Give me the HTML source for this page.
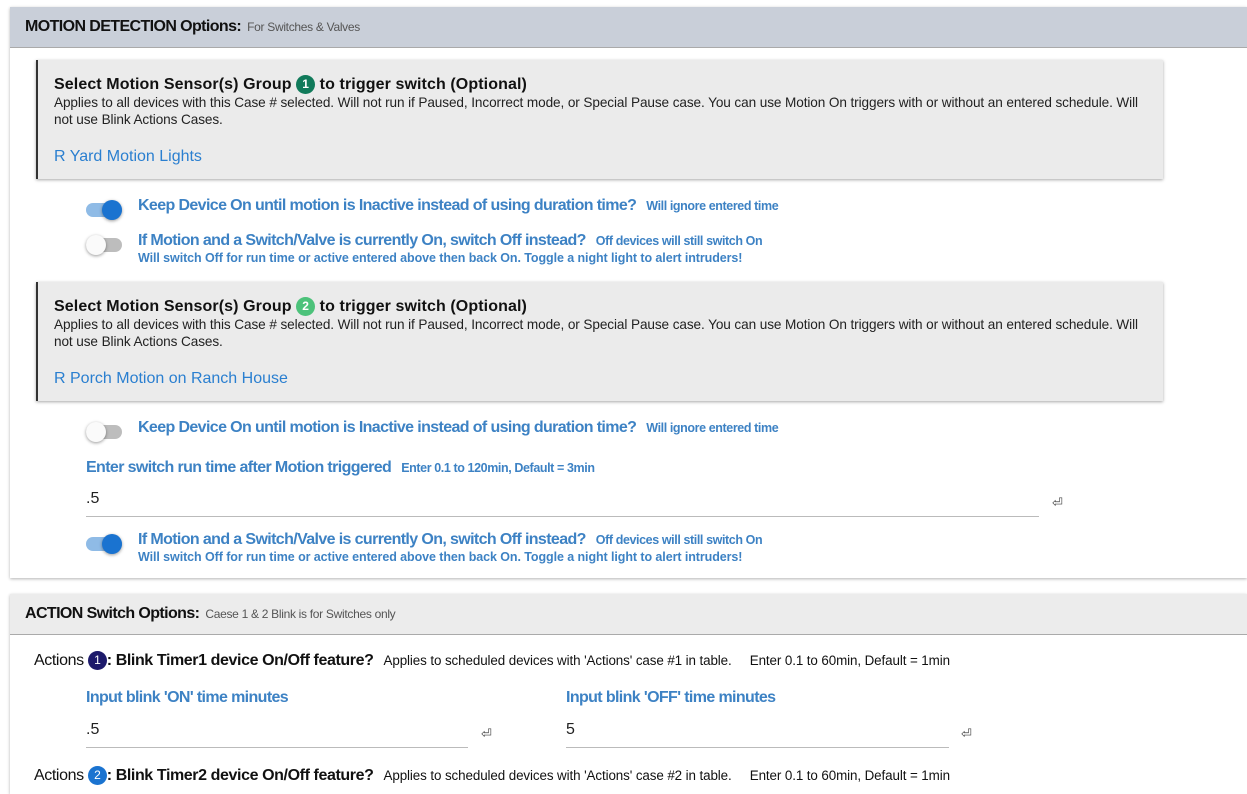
<!DOCTYPE html>
<html><head><meta charset="utf-8"><style>
body{margin:0;width:1247px;height:779px;overflow:hidden;background:#fff;font-family:"Liberation Sans",sans-serif;position:relative}
.abs{position:absolute;white-space:nowrap}
.card{position:absolute;left:10px;right:0;background:#fff;box-shadow:0 1px 3px rgba(0,0,0,.3)}
.hdr{position:absolute;left:0;right:0;top:0;height:40px;border-bottom:1px solid #aaa}
.hdr b{position:absolute;left:15px;top:11px;font-size:16px;letter-spacing:-.6px;color:#111}
.hdr span{font-size:12px;font-weight:normal;color:#555;margin-left:6px;letter-spacing:-.3px}
.box{position:absolute;left:36px;width:1125px;background:#ebebeb;border-left:2px solid #333;box-shadow:0 1px 3px rgba(0,0,0,.35)}
.box .t{position:absolute;left:16px;top:15px;font-size:16px;font-weight:bold;color:#111;letter-spacing:.1px}
.box .d{position:absolute;left:16px;top:34px;font-size:13.6px;color:#222;line-height:17px;width:1090px;white-space:normal;letter-spacing:-.1px}
.box .l{position:absolute;left:16px;top:88px;font-size:16px;color:#2a7fd0}
.num{display:inline-block;width:19px;height:19px;border-radius:50%;color:#fff;font-size:12px;text-align:center;line-height:19px;vertical-align:1px}
.tog{position:absolute;width:36px;height:14px;border-radius:7px}
.tog i{position:absolute;top:-3px;width:20px;height:20px;border-radius:50%;box-shadow:0 1px 3px rgba(0,0,0,.4)}
.on{background:#8fbbe6}.on i{left:16px;background:#1a73d0}
.off{background:#bdbdbd}.off i{left:0;background:#fafafa}
.lab{position:absolute;font-size:16px;color:#3d82c4;white-space:nowrap;letter-spacing:-.62px;font-weight:bold}
.lab small{font-size:12.5px;margin-left:10px;letter-spacing:-.4px}
.sub{position:absolute;font-size:12.5px;color:#3d82c4;white-space:nowrap;letter-spacing:-.08px;font-weight:bold}
.inp{position:absolute;border-bottom:1px solid #bbb;height:26px;padding-top:4px;font-size:16px;color:#222}
.ret{position:absolute;font-size:13px;color:#444}
</style></head><body>
<div class="card" style="top:7px;height:571px">
 <div class="hdr" style="background:#c9cfd9"><b>MOTION DETECTION Options:<span>For Switches &amp; Valves</span></b></div>
</div>
<div class="box" style="top:60px;height:119px">
 <div class="t">Select Motion Sensor(s) Group <span class="num" style="background:#107a5a">1</span> to trigger switch (Optional)</div>
 <div class="d">Applies to all devices with this Case # selected. Will not run if Paused, Incorrect mode, or Special Pause case. You can use Motion On triggers with or without an entered schedule. Will not use Blink Actions Cases.</div>
 <div class="l">R Yard Motion Lights</div>
</div>
<div class="tog on" style="left:86px;top:203px"><i></i></div>
<div class="lab" style="left:138px;top:197px">Keep Device On until motion is Inactive instead of using duration time?<small>Will ignore entered time</small></div>
<div class="tog off" style="left:86px;top:238px"><i></i></div>
<div class="lab" style="left:138px;top:232px">If Motion and a Switch/Valve is currently On, switch Off instead?<small>Off devices will still switch On</small></div>
<div class="sub" style="left:138px;top:251px">Will switch Off for run time or active entered above then back On. Toggle a night light to alert intruders!</div>

<div class="box" style="top:282px;height:119px">
 <div class="t">Select Motion Sensor(s) Group <span class="num" style="background:#4cc27a">2</span> to trigger switch (Optional)</div>
 <div class="d">Applies to all devices with this Case # selected. Will not run if Paused, Incorrect mode, or Special Pause case. You can use Motion On triggers with or without an entered schedule. Will not use Blink Actions Cases.</div>
 <div class="l">R Porch Motion on Ranch House</div>
</div>
<div class="tog off" style="left:86px;top:425px"><i></i></div>
<div class="lab" style="left:138px;top:419px">Keep Device On until motion is Inactive instead of using duration time?<small>Will ignore entered time</small></div>
<div class="lab" style="left:86px;top:459px">Enter switch run time after Motion triggered<small>Enter 0.1 to 120min, Default = 3min</small></div>
<div class="inp" style="left:86px;top:486px;width:953px">.5</div>
<div class="ret" style="left:1052px;top:495px">⏎</div>
<div class="tog on" style="left:86px;top:537px"><i></i></div>
<div class="lab" style="left:138px;top:531px">If Motion and a Switch/Valve is currently On, switch Off instead?<small>Off devices will still switch On</small></div>
<div class="sub" style="left:138px;top:550px">Will switch Off for run time or active entered above then back On. Toggle a night light to alert intruders!</div>

<div class="card" style="top:594px;height:200px">
 <div class="hdr" style="background:#ececec"><b style="font-size:16px">ACTION Switch Options:<span>Caese 1 &amp; 2 Blink is for Switches only</span></b></div>
</div>
<div class="abs" style="left:34px;top:651px;font-size:16px;color:#111;letter-spacing:-.4px">Actions <span class="num" style="background:#1d1a6b">1</span><b>: Blink Timer1 device On/Off feature?</b> <span style="font-size:13.4px;margin-left:6px;letter-spacing:-.1px">Applies to scheduled devices with 'Actions' case #1 in table. &nbsp;&nbsp;&nbsp; Enter 0.1 to 60min, Default = 1min</span></div>
<div class="lab" style="left:86px;top:689px">Input blink 'ON' time minutes</div>
<div class="lab" style="left:566px;top:689px">Input blink 'OFF' time minutes</div>
<div class="inp" style="left:86px;top:717px;width:382px">.5</div>
<div class="inp" style="left:566px;top:717px;width:383px">5</div>
<div class="ret" style="left:481px;top:726px">⏎</div>
<div class="ret" style="left:961px;top:726px">⏎</div>
<div class="abs" style="left:34px;top:766px;font-size:16px;color:#111;letter-spacing:-.4px">Actions <span class="num" style="background:#1a73d0">2</span><b>: Blink Timer2 device On/Off feature?</b> <span style="font-size:13.4px;margin-left:6px;letter-spacing:-.1px">Applies to scheduled devices with 'Actions' case #2 in table. &nbsp;&nbsp;&nbsp; Enter 0.1 to 60min, Default = 1min</span></div>
</body></html>
